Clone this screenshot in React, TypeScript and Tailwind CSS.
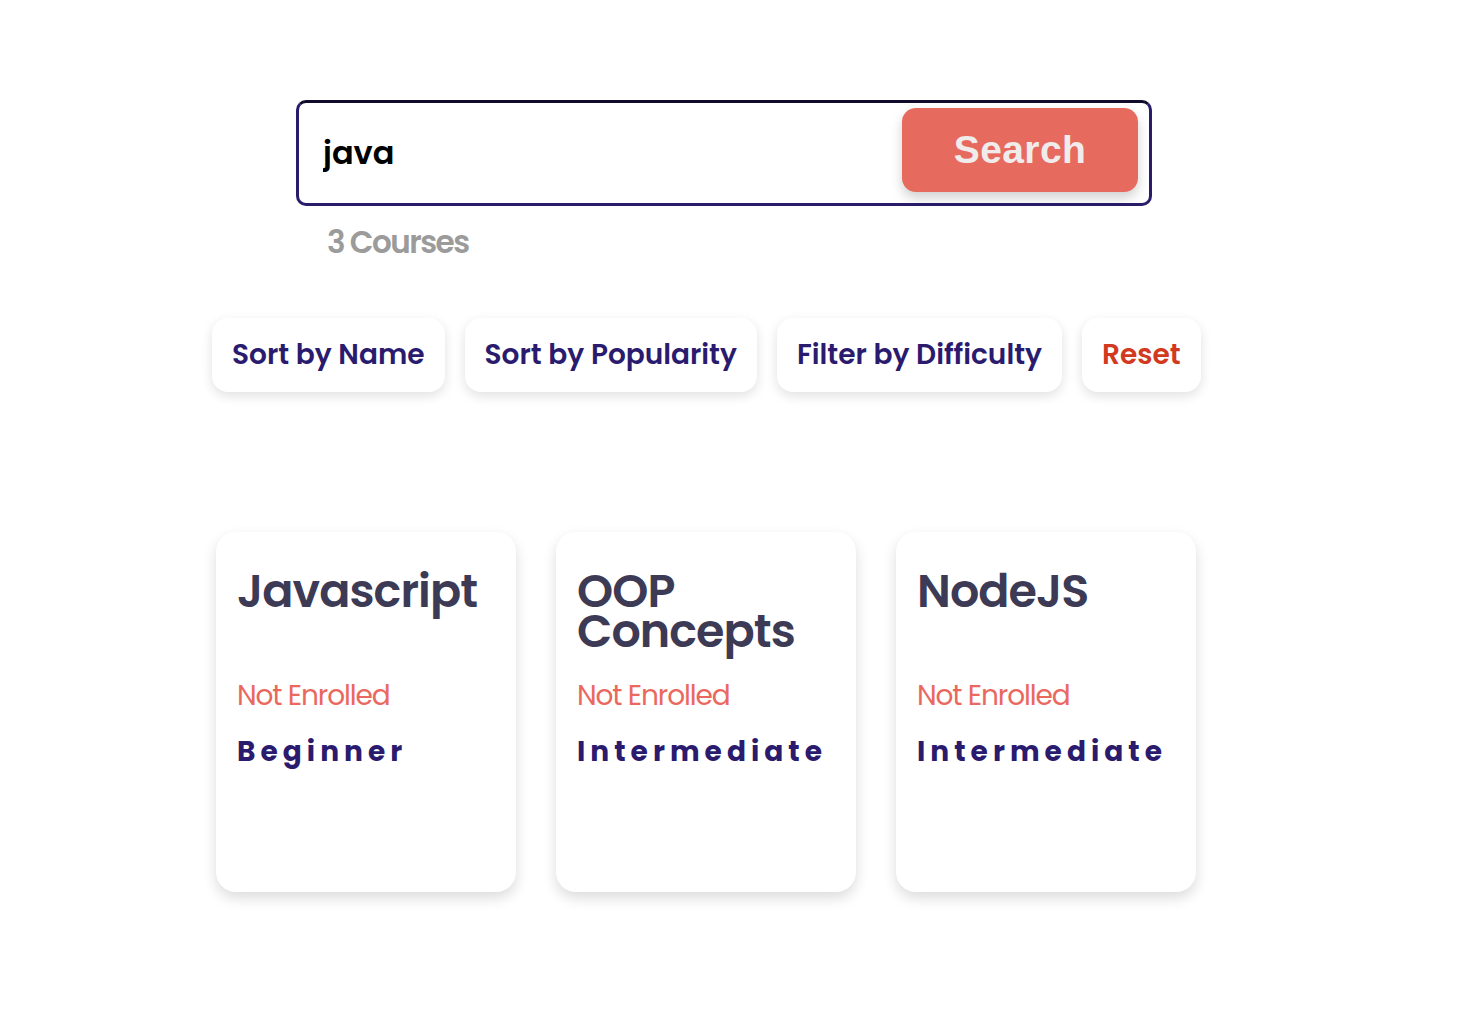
import { useState } from "react";

const COURSES = [
  { id: 1, title: "Javascript", enrolled: false, level: "Beginner" },
  { id: 2, title: "OOP Concepts", enrolled: false, level: "Intermediate" },
  { id: 3, title: "NodeJS", enrolled: false, level: "Intermediate" },
];

const FONT = "font-['Poppins','Inter','Noto_Sans',sans-serif]";

function CourseCard({ title, enrolled, level }: { title: string; enrolled: boolean; level: string }) {
  return (
    <div className="w-[300px] h-[360px] rounded-[20px] bg-white shadow-[0_6px_14px_rgba(0,0,0,0.14)] px-[21px] pt-[39px] flex flex-col">
      <h2 className="h-[105px] text-[46px] leading-[40px] font-semibold tracking-[-0.02em] text-[#3d3a55]">
        {title}
      </h2>
      <p className="text-[28px] leading-[40px] tracking-[-0.04em] text-[#e9695e]">
        {enrolled ? "Enrolled" : "Not Enrolled"}
      </p>
      <p className="mt-[16px] text-[28px] leading-[40px] font-bold tracking-[0.18em] text-[#2b1b6e]">
        {level}
      </p>
    </div>
  );
}

export default function App() {
  const [query, setQuery] = useState("java");

  return (
    <div className={`min-h-screen bg-white pt-[100px] ${FONT}`}>
      {/* search */}
      <div className="ml-[296px] w-[856px] h-[106px] rounded-[10px] border-[3px] border-[#2a1c6a] border-t-[#120c2c] flex items-start pt-[5px] pl-[24px] pr-[11px]">
        <input
          value={query}
          onChange={(e) => setQuery(e.target.value)}
          className="flex-1 min-w-0 h-[84px] mt-[3px] outline-none text-[32px] font-semibold text-black bg-transparent"
        />
        <button className="shrink-0 w-[236px] h-[84px] rounded-[14px] bg-[#e76a5f] shadow-[0_6px_12px_rgba(0,0,0,0.18)] text-[#f1ecec] text-[39px] font-bold font-['Liberation_Sans',Arial,sans-serif] tracking-[0.01em]">
          Search
        </button>
      </div>
      <p className="ml-[327px] mt-[18px] text-[31px] leading-[36px] font-semibold tracking-[-0.05em] text-[#9b9b9b]">
        3 Courses
      </p>

      {/* sort / filter */}
      <div className="ml-[212px] mt-[58px] flex gap-5">
        {["Sort by Name", "Sort by Popularity", "Filter by Difficulty"].map((label) => (
          <button
            key={label}
            className="h-[74px] px-[20px] rounded-[16px] bg-white shadow-[0_4px_12px_rgba(0,0,0,0.12)] text-[28px] font-semibold text-[#2b1b6e]"
          >
            {label}
          </button>
        ))}
        <button className="h-[74px] px-[20px] rounded-[16px] bg-white shadow-[0_4px_12px_rgba(0,0,0,0.12)] text-[28px] font-semibold text-[#d13a1e]">
          Reset
        </button>
      </div>

      {/* courses */}
      <div className="ml-[216px] mt-[140px] flex gap-10">
        {COURSES.map((c) => (
          <CourseCard key={c.id} title={c.title} enrolled={c.enrolled} level={c.level} />
        ))}
      </div>
    </div>
  );
}
